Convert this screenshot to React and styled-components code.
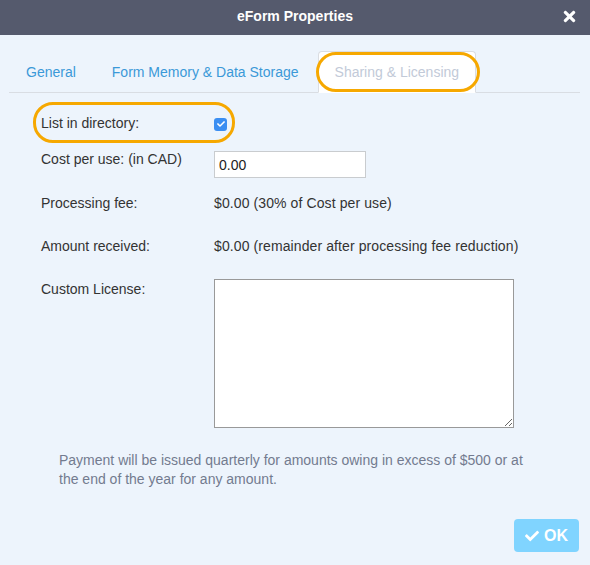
import React from "react";
import styled, { createGlobalStyle } from "styled-components";
import { FaCheck, FaTimes } from "react-icons/fa";

const Global = createGlobalStyle`
  html, body { margin: 0; padding: 0; }
  body {
    background: #edf4fc;
    font-family: "Liberation Sans", Arial, Helvetica, sans-serif;
    font-size: 14px;
    color: #333;
  }
`;

const Dialog = styled.div`
  width: 590px;
  height: 565px;
  background: #edf4fc;
  display: flex;
  flex-direction: column;
`;

const Header = styled.div`
  height: 35px;
  background: #555a6d;
  display: grid;
  grid-template-columns: 1fr auto 1fr;
  align-items: center;
`;

const Title = styled.div`
  grid-column: 2;
  color: #fff;
  font-weight: bold;
  font-size: 14px;
  margin-top: -4px;
`;

const Close = styled.button`
  grid-column: 3;
  justify-self: end;
  margin-right: 12px;
  margin-top: -3px;
  background: none;
  border: none;
  padding: 0;
  color: #fff;
  display: flex;
  font-size: 17px;
  cursor: pointer;
`;

const TabBar = styled.div`
  margin: 16px 10px 0 9px;
  border-bottom: 1px solid #d9dde3;
  display: flex;
`;

const Tab = styled.div`
  position: relative;
  height: 40px;
  padding: 0 16px;
  margin-right: 2px;
  margin-bottom: -1px;
  display: flex;
  align-items: center;
  font-size: 14px;
  color: ${(p) => (p.$active ? "#c2cad8" : "#3b99d8")};
  background: ${(p) => (p.$active ? "#fff" : "transparent")};
  border: 1px solid ${(p) => (p.$active ? "#dadde2" : "transparent")};
  border-bottom-color: ${(p) => (p.$active ? "#fff" : "transparent")};
  border-radius: 4px 4px 0 0;
`;

const Highlight = styled.div`
  position: absolute;
  pointer-events: none;
  border: 3px solid #f6a800;
  border-radius: 20px;
  box-sizing: border-box;
  left: ${(p) => p.$left}px;
  top: ${(p) => p.$top}px;
  width: ${(p) => p.$width}px;
  height: ${(p) => p.$height}px;
`;

const Form = styled.div`
  padding-left: 41px;
  display: flex;
  flex-direction: column;
`;

const Row = styled.div`
  position: relative;
  display: grid;
  grid-template-columns: 173px 1fr;
  align-items: ${(p) => p.$align || "start"};
  margin-top: ${(p) => p.$mt}px;
`;

const Label = styled.div`
  line-height: ${(p) => p.$lh || 20}px;
  color: #333;
`;

const Value = styled.div`
  line-height: 20px;
  color: #333;
  letter-spacing: 0.1px;
`;

const Check = styled.span`
  width: 13px;
  height: 13px;
  margin-top: 2px;
  border-radius: 3px;
  background: #3b8ef2;
  display: flex;
  align-items: center;
  justify-content: center;
  color: #fff;
  font-size: 8px;
`;

const Input = styled.input`
  box-sizing: border-box;
  width: 152px;
  height: 27px;
  border: 1px solid #c9cccf;
  background: #fff;
  padding: 0 4px;
  font-family: "Liberation Sans", Arial, sans-serif;
  font-size: 14px;
  color: #222;
  outline: none;
`;

const TextArea = styled.textarea`
  box-sizing: border-box;
  width: 300px;
  height: 149px;
  border: 1px solid #999;
  background: #fff;
  font-family: "Liberation Sans", Arial, sans-serif;
  font-size: 14px;
  margin: 0;
  outline: none;
`;

const Note = styled.p`
  margin: 23px 0 0 59px;
  width: 478px;
  line-height: 19px;
  color: #737b8f;
  font-size: 14px;
`;

const Footer = styled.div`
  display: flex;
  justify-content: flex-end;
  margin-top: 30px;
  padding-right: 11px;
`;

const OkButton = styled.button`
  width: 65px;
  height: 33px;
  border: none;
  border-radius: 4px;
  background: #80d4ff;
  color: #fff;
  font-family: "Liberation Sans", Arial, sans-serif;
  font-weight: bold;
  font-size: 16px;
  display: flex;
  align-items: center;
  justify-content: center;
  gap: 5px;
  padding: 0;
  svg { font-size: 14px; }
`;

export default function App() {
  return (
    <>
      <Global />
      <Dialog>
        <Header>
          <Title>eForm Properties</Title>
          <Close aria-label="Close">
            <FaTimes />
          </Close>
        </Header>
        <TabBar>
          <Tab>General</Tab>
          <Tab>Form Memory &amp; Data Storage</Tab>
          <Tab $active>
            Sharing &amp; Licensing
            <Highlight $left={-3} $top={0} $width={164} $height={40} />
          </Tab>
        </TabBar>
        <Form>
          <Row $mt={20} $align="center">
            <Label>List in directory:</Label>
            <Check>
              <FaCheck />
            </Check>
            <Highlight $left={-8} $top={-11} $width={202} $height={41} />
          </Row>
          <Row $mt={18}>
            <Label $lh={16}>Cost per use: (in CAD)</Label>
            <Input defaultValue="0.00" />
          </Row>
          <Row $mt={15}>
            <Label>Processing fee:</Label>
            <Value>$0.00 (30% of Cost per use)</Value>
          </Row>
          <Row $mt={23}>
            <Label>Amount received:</Label>
            <Value>$0.00 (remainder after processing fee reduction)</Value>
          </Row>
          <Row $mt={23}>
            <Label>Custom License:</Label>
            <TextArea />
          </Row>
        </Form>
        <Note>
          Payment will be issued quarterly for amounts owing in excess of $500 or at the end of the year for any amount.
        </Note>
        <Footer>
          <OkButton>
            <FaCheck />
            OK
          </OkButton>
        </Footer>
      </Dialog>
    </>
  );
}
